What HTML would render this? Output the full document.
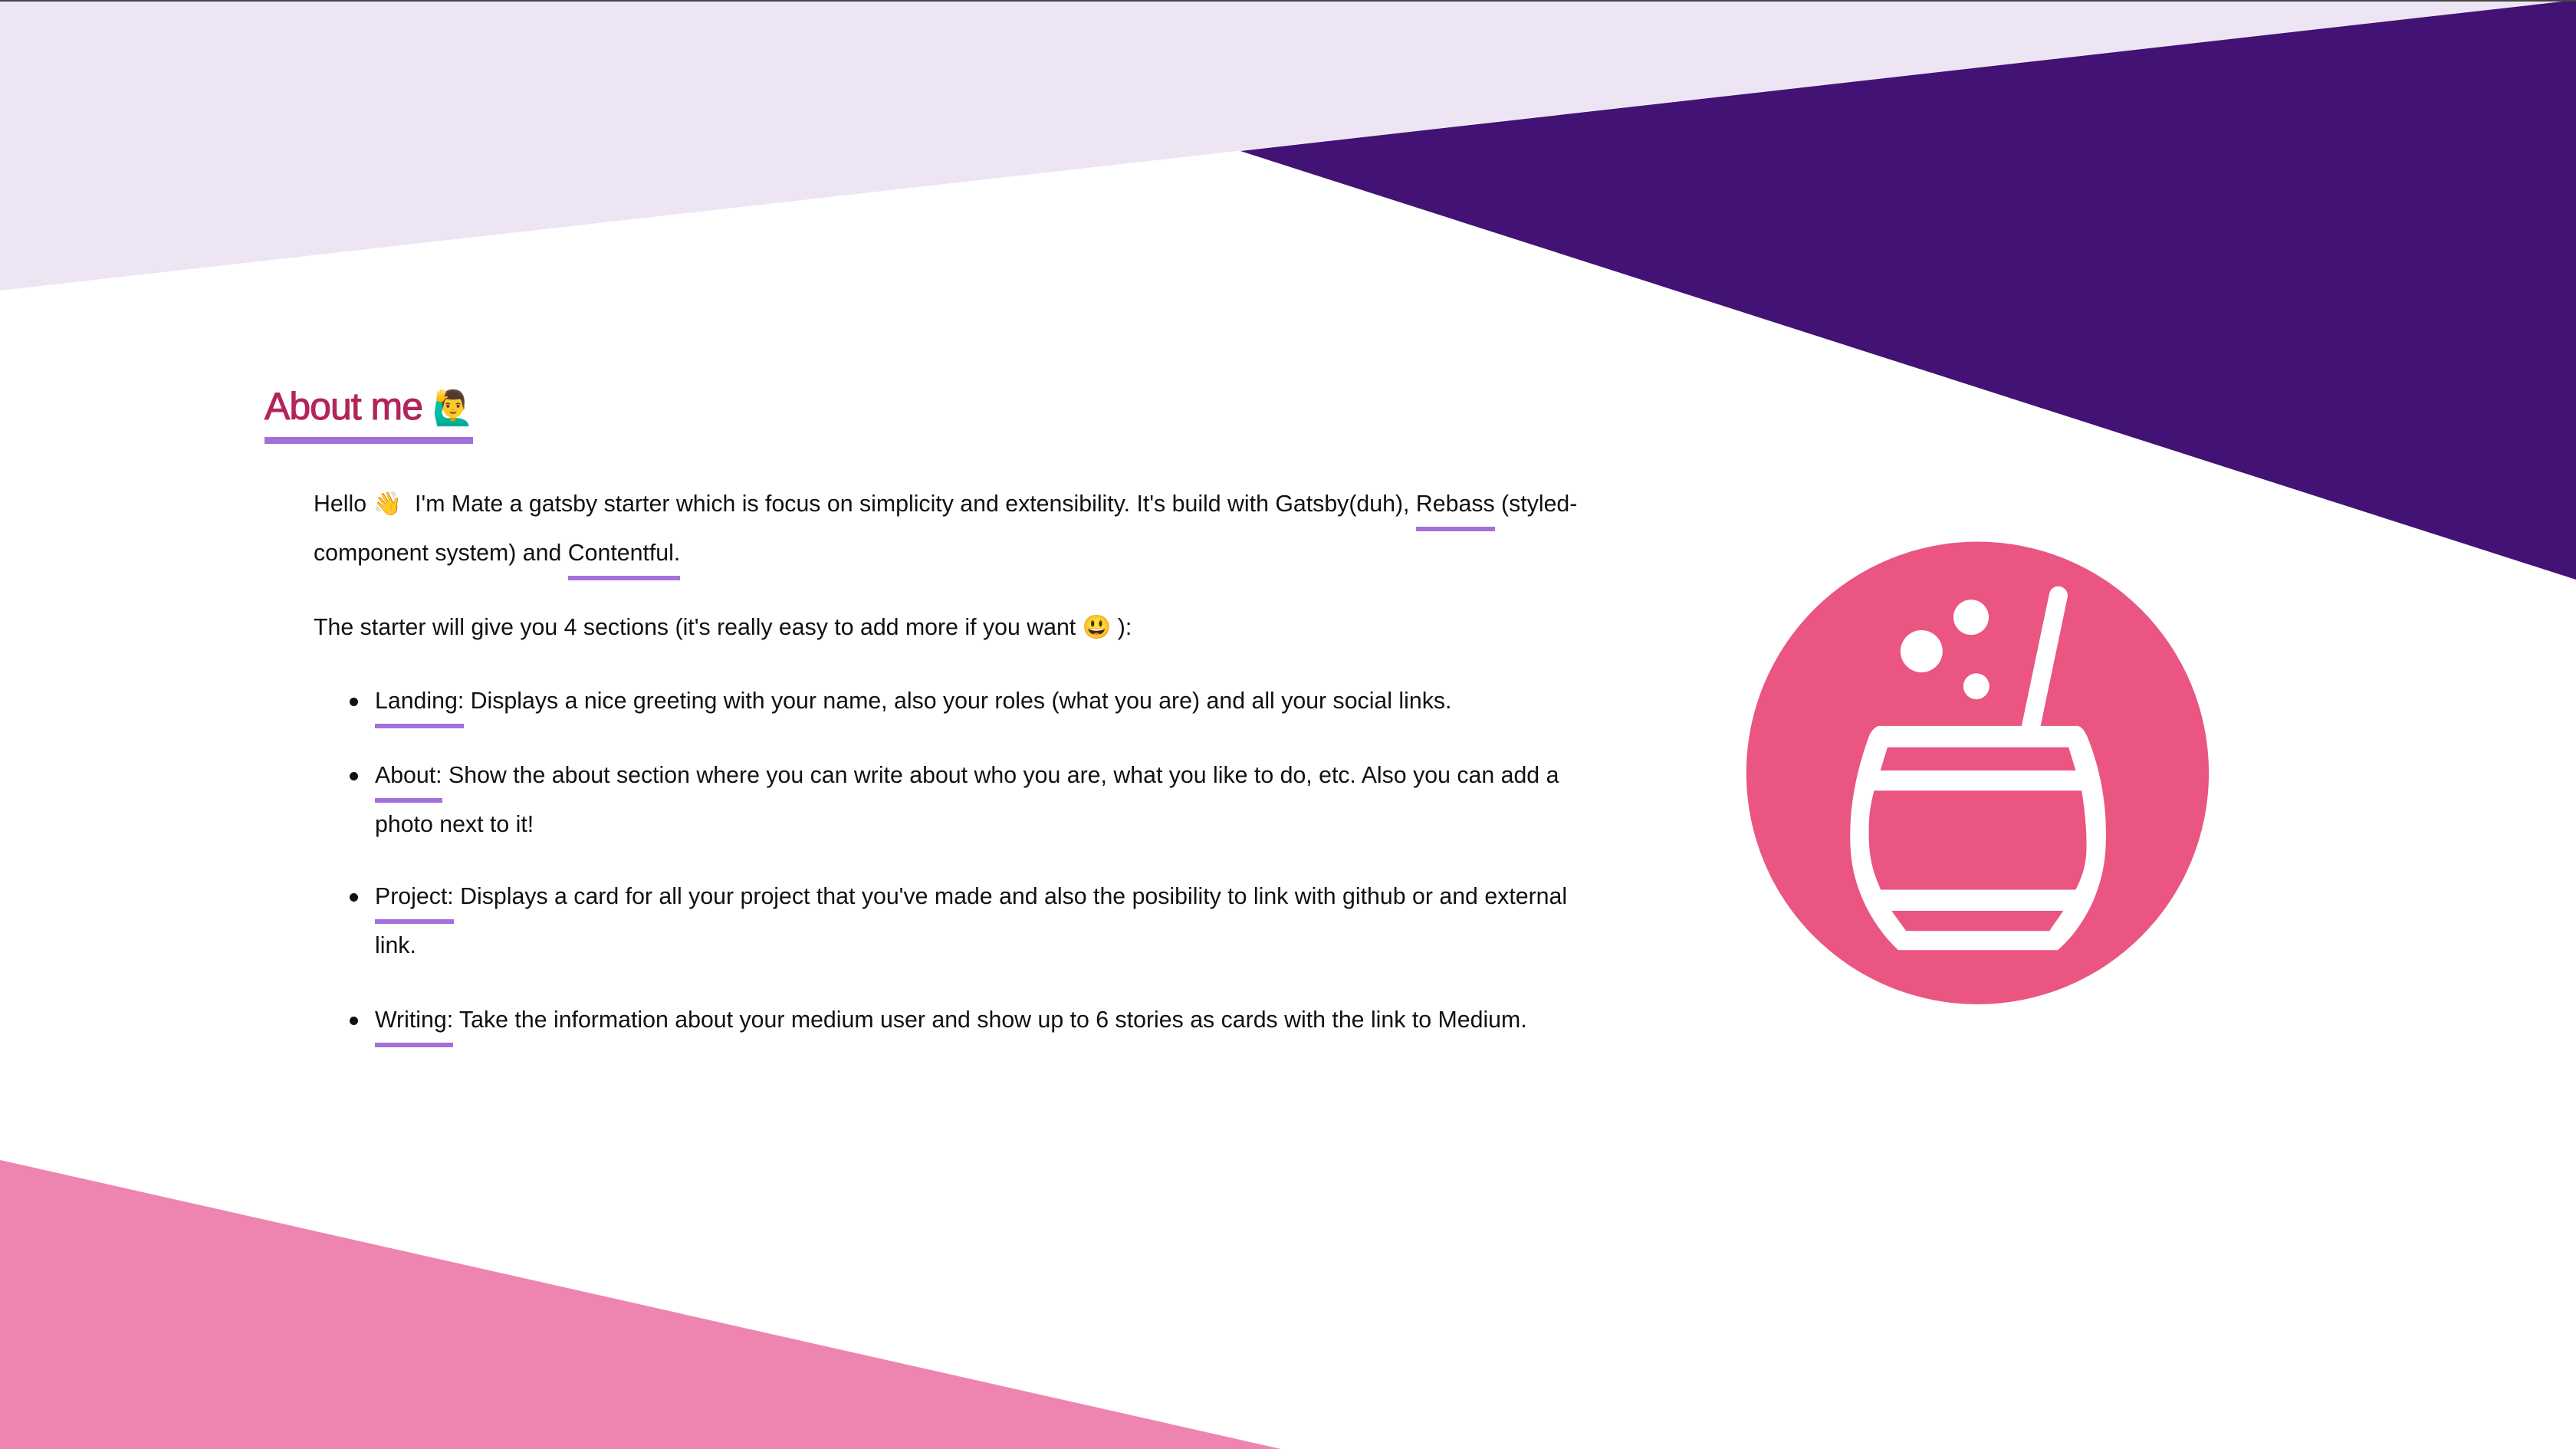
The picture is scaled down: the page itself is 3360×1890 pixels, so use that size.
<!DOCTYPE html>
<html><head><meta charset="utf-8"><style>
html,body{margin:0;padding:0}
body{width:3360px;height:1890px;position:relative;overflow:hidden;background:#fff;font-family:"Liberation Sans",sans-serif;color:#111}
.l{position:absolute;white-space:nowrap;font-size:30.3px;line-height:64px;height:64px;letter-spacing:0}
.u{position:relative;display:inline-block}
.u::after{content:"";position:absolute;left:0;right:0;top:61px;height:6px;background:#a370db}
.b{position:absolute;width:11px;height:11px;border-radius:50%;background:#111}
</style></head><body>
<svg style="position:absolute;left:0;top:0" width="3360" height="1890" viewBox="0 0 3360 1890">
<polygon points="0,0 3360,0 0,379" fill="#ede5f4"/>
<polygon points="1618,197 3360,0 3360,756" fill="#431275"/>
<polygon points="0,1513 1671,1890 0,1890" fill="#ee85b0"/>
<rect x="0" y="0" width="3360" height="2" fill="#444"/>
</svg>
<svg style="position:absolute;left:2260px;top:690px" width="630" height="630" viewBox="0 0 1560 1560">
<circle cx="791" cy="788" r="747" fill="#ea5581"/>
<line x1="1052" y1="215" x2="963" y2="640" stroke="#fff" stroke-width="60" stroke-linecap="round"/>
<circle cx="610" cy="395" r="68" fill="#fff"/>
<circle cx="770" cy="285" r="57" fill="#fff"/>
<circle cx="787" cy="508" r="42" fill="#fff"/>
<path d="M470,636 L1115,636 Q1132,640 1145,670 C1190,780 1210,900 1205,1020 C1200,1180 1120,1300 1050,1360 L535,1360 C470,1300 385,1180 380,1020 C375,900 400,780 440,670 Q450,645 470,636 Z" fill="#fff"/>
<path d="M500,705 L1085,705 L1108,780 L477,780 Z" fill="#ea5581"/>
<path d="M457,845 L1127,845 C1140,920 1145,1000 1142,1050 C1138,1100 1125,1130 1108,1165 L478,1165 C460,1120 442,1080 440,1000 C438,930 445,890 457,845 Z" fill="#ea5581"/>
<path d="M513,1233 L1068,1233 L1023,1298 L560,1298 Z" fill="#ea5581"/>
</svg>
<div style="position:absolute;left:345px;top:495px;font-size:50px;line-height:70px;color:#b3245a;white-space:nowrap;letter-spacing:-1px;-webkit-text-stroke:1px #b3245a">About me <span style="font-size:44px;-webkit-text-stroke:0">🙋‍♂️</span></div>
<div style="position:absolute;left:345px;top:570px;width:272px;height:9px;background:#a370db"></div>
<div class="l" style="left:409px;top:626px">Hello 👋 &nbsp;I'm Mate a gatsby starter which is focus on simplicity and extensibility. It's build with Gatsby(duh), <span class="u">Rebass</span> (styled-</div>
<div class="l" style="left:409px;top:690px">component system) and <span class="u">Contentful.</span></div>
<div class="l" style="left:409px;top:787px">The starter will give you 4 sections (it's really easy to add more if you want 😃 ):</div>
<div class="b" style="left:456px;top:910px"></div>
<div class="l" style="left:489px;top:883px"><span class="u">Landing:</span> Displays a nice greeting with your name, also your roles (what you are) and all your social links.</div>
<div class="b" style="left:456px;top:1007px"></div>
<div class="l" style="left:489px;top:980px"><span class="u">About:</span> Show the about section where you can write about who you are, what you like to do, etc. Also you can add a</div>
<div class="l" style="left:489px;top:1044px">photo next to it!</div>
<div class="b" style="left:456px;top:1165px"></div>
<div class="l" style="left:489px;top:1138px"><span class="u">Project:</span> Displays a card for all your project that you've made and also the posibility to link with github or and external</div>
<div class="l" style="left:489px;top:1202px">link.</div>
<div class="b" style="left:456px;top:1326px"></div>
<div class="l" style="left:489px;top:1299px"><span class="u">Writing:</span> Take the information about your medium user and show up to 6 stories as cards with the link to Medium.</div>
</body></html>
